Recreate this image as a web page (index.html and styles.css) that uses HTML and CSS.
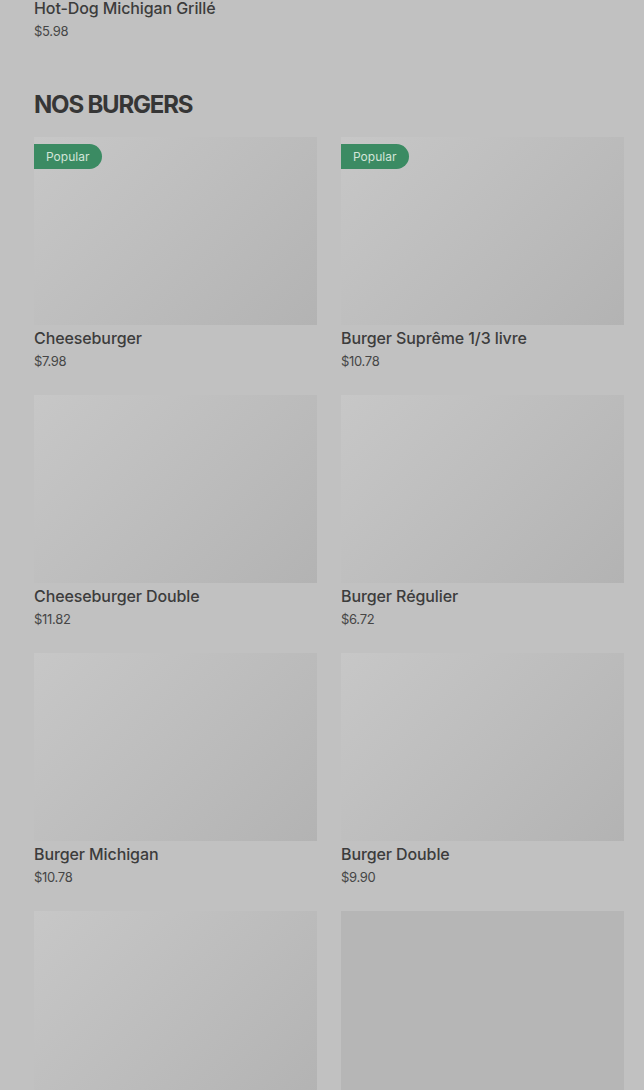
FILE: index.html
```html
<!DOCTYPE html>
<html lang="fr">
<head>
    <meta charset="UTF-8">
    <meta name="viewport" content="width=device-width, initial-scale=1.0">
    <title>Nos Burgers</title>
    <link rel="stylesheet" href="styles.css">
</head>
<body>
    <div class="page">
        <!-- Fin de la section précédente -->
        <div class="prev-item">
            <div class="item-name">Hot-Dog Michigan Grillé</div>
            <div class="item-price">$5.98</div>
        </div>

        <h2 class="section-title">NOS BURGERS</h2>

        <div class="grid">
            <div class="card">
                <div class="thumb"><span class="badge">Popular</span></div>
                <div class="item-name">Cheeseburger</div>
                <div class="item-price">$7.98</div>
            </div>
            <div class="card">
                <div class="thumb"><span class="badge">Popular</span></div>
                <div class="item-name">Burger Suprême 1/3 livre</div>
                <div class="item-price">$10.78</div>
            </div>
            <div class="card">
                <div class="thumb"></div>
                <div class="item-name">Cheeseburger Double</div>
                <div class="item-price">$11.82</div>
            </div>
            <div class="card">
                <div class="thumb"></div>
                <div class="item-name">Burger Régulier</div>
                <div class="item-price">$6.72</div>
            </div>
            <div class="card">
                <div class="thumb"></div>
                <div class="item-name">Burger Michigan</div>
                <div class="item-price">$10.78</div>
            </div>
            <div class="card">
                <div class="thumb"></div>
                <div class="item-name">Burger Double</div>
                <div class="item-price">$9.90</div>
            </div>
            <div class="card">
                <div class="thumb"></div>
            </div>
            <div class="card">
                <div class="thumb flat"></div>
            </div>
        </div>
    </div>
</body>
</html>
```

FILE: styles.css
```css
html, body {
    margin: 0;
    padding: 0;
    background-color: #c1c1c1;
    font-family: Inter, "Noto Sans", sans-serif;
    color: #3a3a3a;
    overflow: hidden;
}
.page {
    padding: 0 20px 0 34px;
    margin-top: -3px;
}
.prev-item {
    margin-bottom: 48px;
}
.section-title {
    margin: 0 0 16px 0;
    font-size: 24px;
    font-weight: 700;
    letter-spacing: -1.2px;
    line-height: 32px;
    color: #363636;
}
.grid {
    display: grid;
    grid-template-columns: 1fr 1fr;
    column-gap: 24px;
    row-gap: 24px;
}
.thumb {
    position: relative;
    height: 188px;
    background: linear-gradient(135deg, #c7c7c7 0%, #bdbdbd 50%, #b3b3b3 100%);
    margin-bottom: 2px;
}
.thumb.flat {
    background: #b6b6b6;
}
.badge {
    position: absolute;
    top: 7px;
    left: 0;
    height: 25px;
    line-height: 25px;
    padding: 0 13px 0 12px;
    background-color: #3b8b63;
    color: #d3e5d9;
    font-size: 12px;
    border-radius: 0 13px 13px 0;
}
.item-name {
    font-size: 16px;
    font-weight: 500;
    line-height: 22px;
    color: #3c3c3c;
    letter-spacing: -0.1px;
}
.item-price {
    margin-top: 2px;
    font-size: 13px;
    line-height: 20px;
    color: #464646;
    letter-spacing: -0.3px;
}
```
